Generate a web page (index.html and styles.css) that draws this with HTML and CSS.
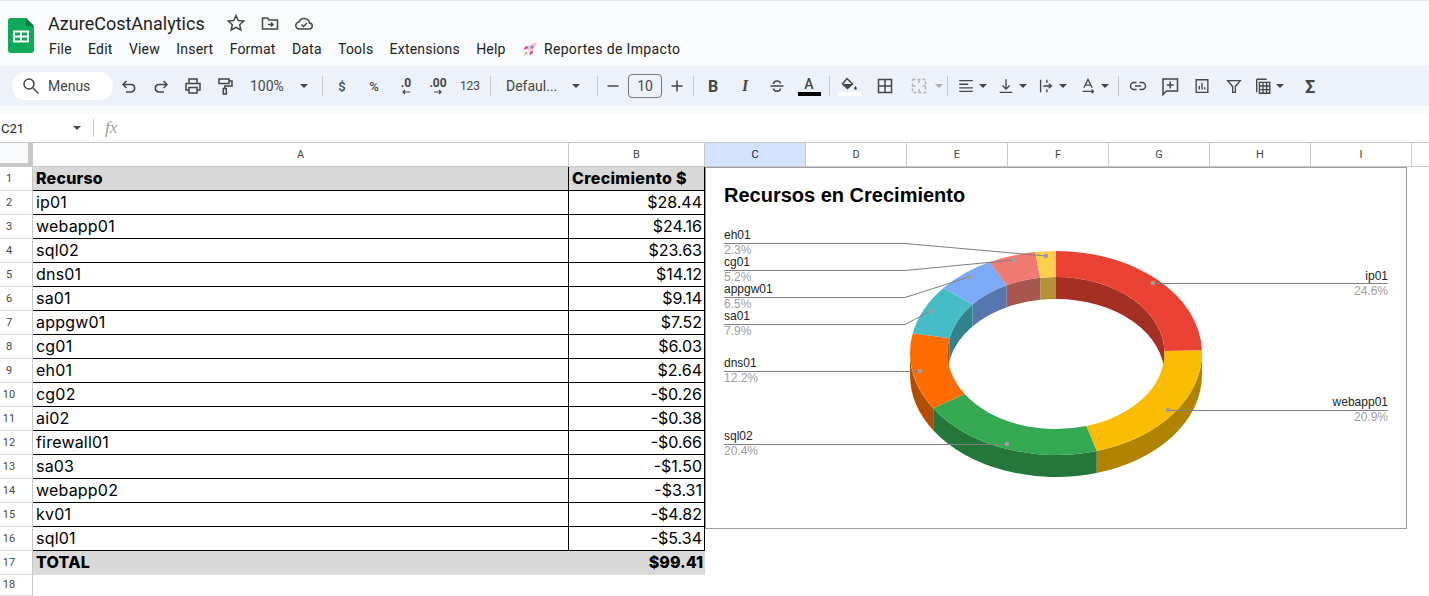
FILE: index.html
```html
<!DOCTYPE html>
<html lang="en">
<head>
    <meta charset="UTF-8">
    <title>AzureCostAnalytics</title>
    <link rel="stylesheet" href="styles.css">
</head>
<body>
    <header class="top">
        <svg class="logo" viewBox="0 0 26 35">
            <path class="logo-page" d="M3 0h15l8 8v24a3 3 0 0 1-3 3H3a3 3 0 0 1-3-3V3a3 3 0 0 1 3-3z"/>
            <path class="logo-fold" d="M18 0l8 8h-8z"/>
            <path class="logo-grid" d="M5 12.500h16v12H5zM7 14.500v3h5v-3zM14 14.500v3h5v-3zM7 19.500v3h5v-3zM14 19.500v3h5v-3z"/>
        </svg>
        <div class="doc">
            <div class="doc-title">
                <span class="doc-name">AzureCostAnalytics</span>
                <svg class="ic title-ic" viewBox="0 0 20 20"><path d="M10 2.500l2.300 5 5.400.6-4 3.600 1.100 5.300-4.800-2.700-4.800 2.700 1.100-5.300-4-3.600 5.400-.6z"/></svg>
                <svg class="ic title-ic" viewBox="0 0 20 20"><path d="M2.500 5h5l1.500 2h8.500v9h-15zM8 11.500h5M11 9.500l2 2-2 2"/></svg>
                <svg class="ic title-ic" viewBox="0 0 20 20"><path d="M5.500 16a3.500 3.500 0 0 1-.5-7 5.500 5.500 0 0 1 10.500 1 3 3 0 0 1-.5 6zM7.500 11.500l2 2 3.500-3.500"/></svg>
            </div>
            <nav class="menu">
                <span>File</span><span>Edit</span><span>View</span><span>Insert</span><span>Format</span><span>Data</span><span>Tools</span><span>Extensions</span><span>Help</span>
                <span class="menu-extra">
                    <svg class="rocket" viewBox="0 0 16 16">
                        <path fill="#f6c4d2" d="M5 8c2-4 6-6 10-7-1 4-3 8-7 10z"/>
                        <path fill="#e0457b" d="M5 8L1.500 8.500 3.500 5.500l3-.5zM8 11l-.5 3.500 3-2 .5-3z"/>
                        <path fill="#f0923a" d="M4 10.500l1.500 1.500L2 15z"/>
                        <circle fill="#6f9ad8" cx="10" cy="6" r="1.500"/>
                    </svg>
                    Reportes de Impacto
                </span>
            </nav>
        </div>
    </header>

    <div class="toolbar">
        <div class="search">
            <svg class="ic" viewBox="0 0 20 20"><circle cx="8" cy="8" r="5"/><path d="M12 12l5.500 5.500"/></svg>
            <span>Menus</span>
        </div>
        <button class="tool"><svg class="ic" viewBox="0 0 20 20"><path d="M7.500 5L4 8.500 7.500 12M4 8.500h8.500a3.800 3.800 0 0 1 0 7.500H7"/></svg></button>
        <button class="tool"><svg class="ic" viewBox="0 0 20 20"><path d="M12.500 5L16 8.500 12.500 12M16 8.500H7.500a3.800 3.800 0 0 0 0 7.500H13"/></svg></button>
        <button class="tool"><svg class="ic" viewBox="0 0 20 20"><path d="M6 7V3h8v4M5.500 14H3V7.500h14V14h-2.500M6 11.500h8V17H6z"/></svg></button>
        <button class="tool"><svg class="ic" viewBox="0 0 20 20"><path d="M4 3h10v4.500H4zM14 5h3v5H9.800v2.500M8.300 12.500h3V18h-3z"/></svg></button>
        <div class="select zoom"><span>100%</span><i class="caret"></i></div>
        <i class="sep"></i>
        <button class="tool txt">$</button>
        <button class="tool txt">%</button>
        <button class="tool dec"><span>.0</span><svg class="mini" viewBox="0 0 10 6"><path d="M9 3H2M4 1L2 3l2 2"/></svg></button>
        <button class="tool dec"><span>.00</span><svg class="mini" viewBox="0 0 10 6"><path d="M1 3h7M6 1l2 2-2 2"/></svg></button>
        <button class="tool num">123</button>
        <i class="sep"></i>
        <div class="select font"><span>Defaul...</span><i class="caret"></i></div>
        <i class="sep"></i>
        <button class="tool step"><svg class="ic" viewBox="0 0 20 20"><path d="M4.500 10h11"/></svg></button>
        <div class="size">10</div>
        <button class="tool step"><svg class="ic" viewBox="0 0 20 20"><path d="M4.500 10h11M10 4.500v11"/></svg></button>
        <i class="sep"></i>
        <button class="tool letter bold">B</button>
        <button class="tool letter ital">I</button>
        <button class="tool"><svg class="ic" viewBox="0 0 20 20"><path d="M3.500 10h13M6.500 8c0-4 7-4 7-.5M13.500 12.500c0 3.500-7 3.500-7 0"/></svg></button>
        <button class="tool color"><span>A</span><i class="bar"></i></button>
        <i class="sep"></i>
        <button class="tool color fill">
            <svg class="ic fill-ic" viewBox="0 0 20 14">
                <path d="M8 1.500l5.500 5.500-5 4.500L3.500 7z"/>
                <path class="solid" d="M3.500 7h10l-5 4.500zM16.500 9c.9 1.300 1.300 1.800 1.300 2.500a1.300 1.300 0 0 1-2.600 0c0-.7.400-1.200 1.300-2.500z"/>
            </svg>
            <i class="bar white"></i>
        </button>
        <button class="tool borders"><svg class="ic" viewBox="0 0 20 20"><path d="M3.500 3.500h13v13h-13zM10 3.500v13M3.500 10h13"/></svg></button>
        <button class="tool merge"><svg class="ic" viewBox="0 0 20 20"><path stroke-dasharray="3 2" d="M3.500 3.500h13v13h-13z"/><path d="M10 3v4M10 13v4M3.500 10h3M16.500 10h-3"/></svg></button>
        <i class="caret caret-off"></i>
        <i class="sep sep-merge"></i>
        <div class="drop"><svg class="ic" viewBox="0 0 20 20"><path d="M2.500 4h15M2.500 8h10M2.500 12h15M2.500 16h15"/></svg><i class="caret"></i></div>
        <div class="drop"><svg class="ic" viewBox="0 0 20 20"><path d="M10 2.500V13M6 9.500l4 4 4-4M3 17h14"/></svg><i class="caret"></i></div>
        <div class="drop"><svg class="ic" viewBox="0 0 20 20"><path d="M4 3v14M11 3v3.500M11 13.500V17M7 10h9M13 7.500l3 2.500-3 2.500"/></svg><i class="caret"></i></div>
        <div class="drop drop-last"><svg class="ic" viewBox="0 0 20 20"><path d="M5.500 12L10 2.500 14.500 12M7 9h6M4 16h12M14 14l2 2-2 2"/></svg><i class="caret"></i></div>
        <i class="sep"></i>
        <button class="tool"><svg class="ic" viewBox="0 0 20 20"><path d="M8.500 6.500H6a3.500 3.500 0 0 0 0 7h2.500M11.500 6.500H14a3.500 3.500 0 0 1 0 7h-2.500M7 10h6"/></svg></button>
        <button class="tool"><svg class="ic" viewBox="0 0 20 20"><path d="M3 3h14.500v12H6.500L3 18.500zM10.200 5.500v7M6.700 9h7"/></svg></button>
        <button class="tool"><svg class="ic small" viewBox="0 0 20 20"><path d="M3.500 3h13v14h-13zM7 14V10M10 14V6.500M13 14v-2.500"/></svg></button>
        <button class="tool"><svg class="ic small" viewBox="0 0 20 20"><path d="M3 4h14l-5.500 6.500V17h-3v-6.500z"/></svg></button>
        <div class="drop drop-calc"><svg class="ic" viewBox="0 0 20 20"><path d="M3 2.500h11M3 2.500V17M6 6h11.500v12H6zM6 10h11.500M6 14h11.500M10 6v12M14 6v12"/></svg><i class="caret"></i></div>
        <button class="tool sigma">Σ</button>
    </div>

    <div class="formula">
        <span class="cell-ref">C21</span>
        <i class="caret"></i>
        <i class="sep"></i>
        <span class="fx">fx</span>
    </div>

    <main class="sheet">
        <div class="col-heads">
            <div class="corner"></div>
            <div class="col-head col-a">A</div>
            <div class="col-head col-b">B</div>
            <div class="col-head col-n active">C</div>
            <div class="col-head col-n">D</div>
            <div class="col-head col-n">E</div>
            <div class="col-head col-n">F</div>
            <div class="col-head col-n">G</div>
            <div class="col-head col-n">H</div>
            <div class="col-head col-n">I</div>
        </div>
        <div class="row head"><div class="row-num">1</div><div class="cell col-a">Recurso</div><div class="cell col-b">Crecimiento $</div></div>
        <div class="row"><div class="row-num">2</div><div class="cell col-a">ip01</div><div class="cell col-b amount">$28.44</div></div>
        <div class="row"><div class="row-num">3</div><div class="cell col-a">webapp01</div><div class="cell col-b amount">$24.16</div></div>
        <div class="row"><div class="row-num">4</div><div class="cell col-a">sql02</div><div class="cell col-b amount">$23.63</div></div>
        <div class="row"><div class="row-num">5</div><div class="cell col-a">dns01</div><div class="cell col-b amount">$14.12</div></div>
        <div class="row"><div class="row-num">6</div><div class="cell col-a">sa01</div><div class="cell col-b amount">$9.14</div></div>
        <div class="row"><div class="row-num">7</div><div class="cell col-a">appgw01</div><div class="cell col-b amount">$7.52</div></div>
        <div class="row"><div class="row-num">8</div><div class="cell col-a">cg01</div><div class="cell col-b amount">$6.03</div></div>
        <div class="row"><div class="row-num">9</div><div class="cell col-a">eh01</div><div class="cell col-b amount">$2.64</div></div>
        <div class="row"><div class="row-num">10</div><div class="cell col-a">cg02</div><div class="cell col-b amount">-$0.26</div></div>
        <div class="row"><div class="row-num">11</div><div class="cell col-a">ai02</div><div class="cell col-b amount">-$0.38</div></div>
        <div class="row"><div class="row-num">12</div><div class="cell col-a">firewall01</div><div class="cell col-b amount">-$0.66</div></div>
        <div class="row"><div class="row-num">13</div><div class="cell col-a">sa03</div><div class="cell col-b amount">-$1.50</div></div>
        <div class="row"><div class="row-num">14</div><div class="cell col-a">webapp02</div><div class="cell col-b amount">-$3.31</div></div>
        <div class="row"><div class="row-num">15</div><div class="cell col-a">kv01</div><div class="cell col-b amount">-$4.82</div></div>
        <div class="row"><div class="row-num">16</div><div class="cell col-a">sql01</div><div class="cell col-b amount">-$5.34</div></div>
        <div class="row total"><div class="row-num">17</div><div class="cell col-a">TOTAL</div><div class="cell col-b amount">$99.41</div></div>
        <div class="row blank"><div class="row-num">18</div></div>

        <div class="chart">
            <svg class="chart-svg" viewBox="706 168 700 360" width="700" height="360">
                <text class="chart-title" x="724" y="202">Recursos en Crecimiento</text>

                <!-- inner walls -->
                <path fill="#a32f25" d="M1056 277A108.500 76 0 0 1 1164.500 353v22A108.500 76 0 0 0 1056 299z"/>
                <path fill="#b09237" d="M1040.370 277.790A108.500 76 0 0 1 1056 277v22a108.500 76 0 0 0-15.630.79z"/>
                <path fill="#a85650" d="M1006.740 285.280A108.500 76 0 0 1 1040.370 277.790v22a108.500 76 0 0 0-33.630 7.490z"/>
                <path fill="#5677ad" d="M972.400 304.560A108.500 76 0 0 1 1006.740 285.280v22a108.500 76 0 0 0-34.340 19.280z"/>
                <path fill="#31848b" d="M949.550 338.290A108.500 76 0 0 1 972.400 304.560v22a108.500 76 0 0 0-22.850 33.730z"/>
                <path fill="#b34d01" d="M947.500 353A108.500 76 0 0 1 949.550 338.290v22A108.500 76 0 0 0 947.500 375z"/>

                <!-- outer walls -->
                <path fill="#b08400" d="M1202 353A146 102 0 0 1 1096.730 450.950v22A146 102 0 0 0 1202 375z"/>
                <path fill="#24763a" d="M1096.730 450.950A146 102 0 0 1 933.210 408.190v22A146 102 0 0 0 1096.730 472.950z"/>
                <path fill="#b34d01" d="M933.210 408.190A146 102 0 0 1 910 353v22A146 102 0 0 0 933.210 430.190z"/>

                <!-- top faces -->
                <path fill="#ea4335" d="M1056 251A146 102 0 0 1 1201.950 350.440L1164.470 351.090A108.500 76 0 0 0 1056 277z"/>
                <path fill="#fbbc04" d="M1201.950 350.440A146 102 0 0 1 1096.730 450.950L1086.270 425.980A108.500 76 0 0 0 1164.470 351.090z"/>
                <path fill="#34a853" d="M1096.730 450.950A146 102 0 0 1 933.210 408.190L964.750 394.120A108.500 76 0 0 0 1086.270 425.980z"/>
                <path fill="#ff6d01" d="M933.210 408.190A146 102 0 0 1 912.760 333.260L949.550 338.290A108.500 76 0 0 0 964.750 394.120z"/>
                <path fill="#46bdc6" d="M912.760 333.260A146 102 0 0 1 943.510 287.980L972.400 304.560A108.500 76 0 0 0 949.550 338.290z"/>
                <path fill="#7baaf7" d="M943.510 287.980A146 102 0 0 1 989.720 262.120L1006.740 285.280A108.500 76 0 0 0 972.400 304.560z"/>
                <path fill="#f07b72" d="M989.720 262.120A146 102 0 0 1 1034.970 252.060L1040.370 277.790A108.500 76 0 0 0 1006.740 285.280z"/>
                <path fill="#fcd04f" d="M1034.970 252.060A146 102 0 0 1 1056 251V277A108.500 76 0 0 0 1040.370 277.790z"/>

                <!-- leader lines -->
                <path class="leader" d="M724 243.500H905L1046 256M724 270.500H905L1014 260M724 297.500H905L969 277M724 324.500H905L931 311M724 371.500H920M724 444.500H1007M1153 283.500H1388M1168 410.500H1388"/>
                <g class="dots">
                    <circle cx="1046" cy="256" r="2.300"/><circle cx="1014" cy="260" r="2.300"/><circle cx="969" cy="277" r="2.300"/><circle cx="931" cy="311" r="2.300"/>
                    <circle cx="920" cy="371" r="2.300"/><circle cx="1007" cy="444" r="2.300"/><circle cx="1153" cy="283" r="2.300"/><circle cx="1168" cy="410" r="2.300"/>
                </g>

                <!-- labels -->
                <text class="lbl" x="724" y="239">eh01</text><text class="pct" x="724" y="254">2.3%</text>
                <text class="lbl" x="724" y="266">cg01</text><text class="pct" x="724" y="281">5.2%</text>
                <text class="lbl" x="724" y="293">appgw01</text><text class="pct" x="724" y="308">6.5%</text>
                <text class="lbl" x="724" y="320">sa01</text><text class="pct" x="724" y="335">7.9%</text>
                <text class="lbl" x="724" y="367">dns01</text><text class="pct" x="724" y="382">12.2%</text>
                <text class="lbl" x="724" y="440">sql02</text><text class="pct" x="724" y="455">20.4%</text>
                <text class="lbl end" x="1388" y="280">ip01</text><text class="pct end" x="1388" y="295">24.6%</text>
                <text class="lbl end" x="1388" y="406">webapp01</text><text class="pct end" x="1388" y="421">20.9%</text>
            </svg>
        </div>
    </main>
</body>
</html>
```

FILE: styles.css
```css
* {
    box-sizing: border-box;
}

html, body {
    height: 100%;
}

body {
    margin: 0;
    background: white;
    color: #1f1f1f;
    font-family: Roboto, sans-serif;
    overflow: hidden;
}

/* barre du haut */
.top {
    display: flex;
    height: 66px;
    padding: 17px 0 0 8px;
    background: #f9fbfd;
    border-top: 1px solid #e1e3ea;
}

.logo {
    width: 26px;
    height: 35px;
}

.logo-page { fill: #0fa958; }
.logo-fold { fill: #0a7a3f; }
.logo-grid { fill: white; fill-rule: evenodd; }

.doc {
    margin-left: 14px;
    margin-top: -7px;
}

.doc-title {
    display: flex;
    align-items: center;
    height: 24px;
}

.doc-name {
    font-size: 18px;
    margin-right: 21px;
}

.title-ic {
    width: 18px;
    height: 18px;
    margin-right: 14px;
}

.menu {
    display: flex;
    gap: 16.3px;
    margin-top: 5px;
    margin-left: 1px;
    font-size: 14px;
    line-height: 18px;
    letter-spacing: 0.2px;
    color: #202124;
}

.menu-extra {
    display: flex;
    align-items: center;
    gap: 6px;
    letter-spacing: 0.35px;
}

.rocket {
    width: 16px;
    height: 16px;
}

.ic {
    width: 20px;
    height: 20px;
    fill: none;
    stroke: #444746;
    stroke-width: 1.5;
    flex: none;
}

.ic.small {
    width: 18px;
    height: 18px;
}

.ic .solid {
    fill: #444746;
    stroke: none;
}

/* barre d'outils */
.toolbar {
    display: flex;
    align-items: center;
    height: 48px;
    padding: 0 0 8px 4px;
    background: linear-gradient(#edf2fa 40px, #f9fbfd 40px);
    color: #444746;
    font-size: 13px;
}

.search {
    display: flex;
    align-items: center;
    gap: 7px;
    width: 101px;
    height: 28px;
    margin-left: 8px;
    padding-left: 9px;
    background: white;
    border-radius: 14px;
    font-size: 14px;
}

.tool {
    display: flex;
    flex-direction: column;
    align-items: center;
    justify-content: center;
    flex: none;
    width: 32px;
    height: 28px;
    padding: 0;
    border: none;
    background: none;
    color: #444746;
    font-family: Roboto, sans-serif;
}

.txt {
    font-size: 13px;
    font-weight: 500;
}

.num {
    font-size: 12px;
}

.dec {
    font-size: 12px;
    font-weight: 700;
    line-height: 11px;
}

.mini {
    width: 10px;
    height: 6px;
    fill: none;
    stroke: #444746;
    stroke-width: 1.2;
}

.step {
    width: 24px;
}

.size {
    width: 34px;
    height: 24px;
    margin: 0 3px;
    border: 1px solid #747775;
    border-radius: 4px;
    text-align: center;
    font-size: 14px;
    line-height: 22px;
}

.letter {
    font-size: 16px;
}

.bold { font-weight: 700; }
.ital { font-weight: 700; font-style: italic; font-family: "Liberation Serif", serif; }

.color {
    font-size: 14px;
    font-weight: 500;
    line-height: 14px;
}

.bar {
    width: 23px;
    height: 4px;
    margin-top: 1px;
    background: black;
}

.bar.white {
    background: white;
}

.fill-ic {
    height: 14px;
}

.fill {
    margin-right: 4px;
}

.borders {
    margin-right: 2px;
}

.merge {
    opacity: 0.35;
}

.caret {
    width: 0;
    height: 0;
    flex: none;
    border-left: 4px solid transparent;
    border-right: 4px solid transparent;
    border-top: 4px solid #444746;
}

.caret-off {
    opacity: 0.4;
}

.sep {
    flex: none;
    width: 1px;
    height: 20px;
    margin: 0 3px 0 4px;
    background: #c7c7c7;
}

.sep-merge {
    margin-left: 4px;
    margin-right: 4px;
}

.select {
    display: flex;
    align-items: center;
    justify-content: space-between;
    font-size: 14px;
}

.zoom {
    width: 73px;
    padding: 0 6px 0 9px;
    margin-right: 4px;
}

.font {
    width: 90px;
    padding: 0 6px 0 10px;
    margin-left: 2px;
    margin-right: 7px;
}

.drop {
    display: flex;
    align-items: center;
    gap: 4px;
    width: 40px;
    padding-left: 5px;
    flex: none;
}

.drop .ic {
    width: 18px;
    height: 18px;
}

.drop-last {
    margin-left: 2px;
}

.drop-calc {
    padding-left: 4px;
    margin-right: 4px;
}

.sigma {
    font-size: 18px;
    font-weight: 700;
}

/* barre de formule */
.formula {
    display: flex;
    align-items: center;
    height: 28px;
    background: white;
    font-size: 13px;
}

.cell-ref {
    width: 73px;
    padding-left: 1px;
}

.formula .sep {
    margin: 0 0 0 12px;
    height: 18px;
}

.fx {
    margin-left: 11px;
    font-family: "Liberation Serif", serif;
    font-style: italic;
    font-size: 17px;
    color: #9aa0a6;
}

/* feuille */
.sheet {
    position: relative;
    border-top: 1px solid #c7c7c7;
}

.col-heads {
    display: flex;
    height: 24px;
    border-bottom: 1px solid #c7c7c7;
}

.corner {
    width: 33px;
    background: #f8f9fa;
    border-right: 5px solid #c7c7c7;
    border-bottom: 4px solid #c7c7c7;
    margin-bottom: -1px;
}

.col-a { width: 536px; }
.col-b { width: 136px; }
.col-n { width: 101px; }

.col-head {
    border-right: 1px solid #c7c7c7;
    text-align: center;
    font-size: 11px;
    line-height: 23px;
    color: #444746;
}

.col-head.active {
    background: #d3e3fd;
    color: #041e49;
}

.row {
    display: flex;
    height: 24px;
}

.row-num {
    width: 33px;
    padding-right: 14px;
    border-right: 1px solid #c7c7c7;
    border-bottom: 1px solid #dadce0;
    text-align: center;
    font-size: 11px;
    line-height: 23px;
    color: #444746;
}

.blank {
    height: 21px;
}

.blank .row-num {
    line-height: 19px;
}

.cell {
    padding: 0 2px 0 3px;
    border-bottom: 1px solid black;
    border-right: 1px solid black;
    font-family: Inter, sans-serif;
    font-size: 16px;
    line-height: 23px;
    color: black;
    white-space: nowrap;
}

.cell.col-a {
    letter-spacing: 0.2px;
}

.amount {
    text-align: right;
}

.head .cell {
    background: #d9d9d9;
    font-weight: 800;
}

.head .col-b {
    letter-spacing: 0.3px;
}

.total .cell {
    background: #d9d9d9;
    border: none;
    font-weight: 800;
}

.chart {
    position: absolute;
    left: 705px;
    top: 24px;
    width: 702px;
    height: 362px;
    background: white;
    border: 1px solid #9e9e9e;
}

.chart-svg {
    display: block;
}

.chart-svg text {
    font-family: "Liberation Sans", Arial, sans-serif;
}

.chart-title {
    font-size: 20px;
    font-weight: 700;
    fill: black;
}

.leader {
    fill: none;
    stroke: #808080;
    stroke-width: 1;
}

.dots {
    fill: #9e9e9e;
}

.lbl {
    font-size: 12px;
    fill: #222;
}

.pct {
    font-size: 12px;
    fill: #9e9e9e;
}

.end {
    text-anchor: end;
}
```
